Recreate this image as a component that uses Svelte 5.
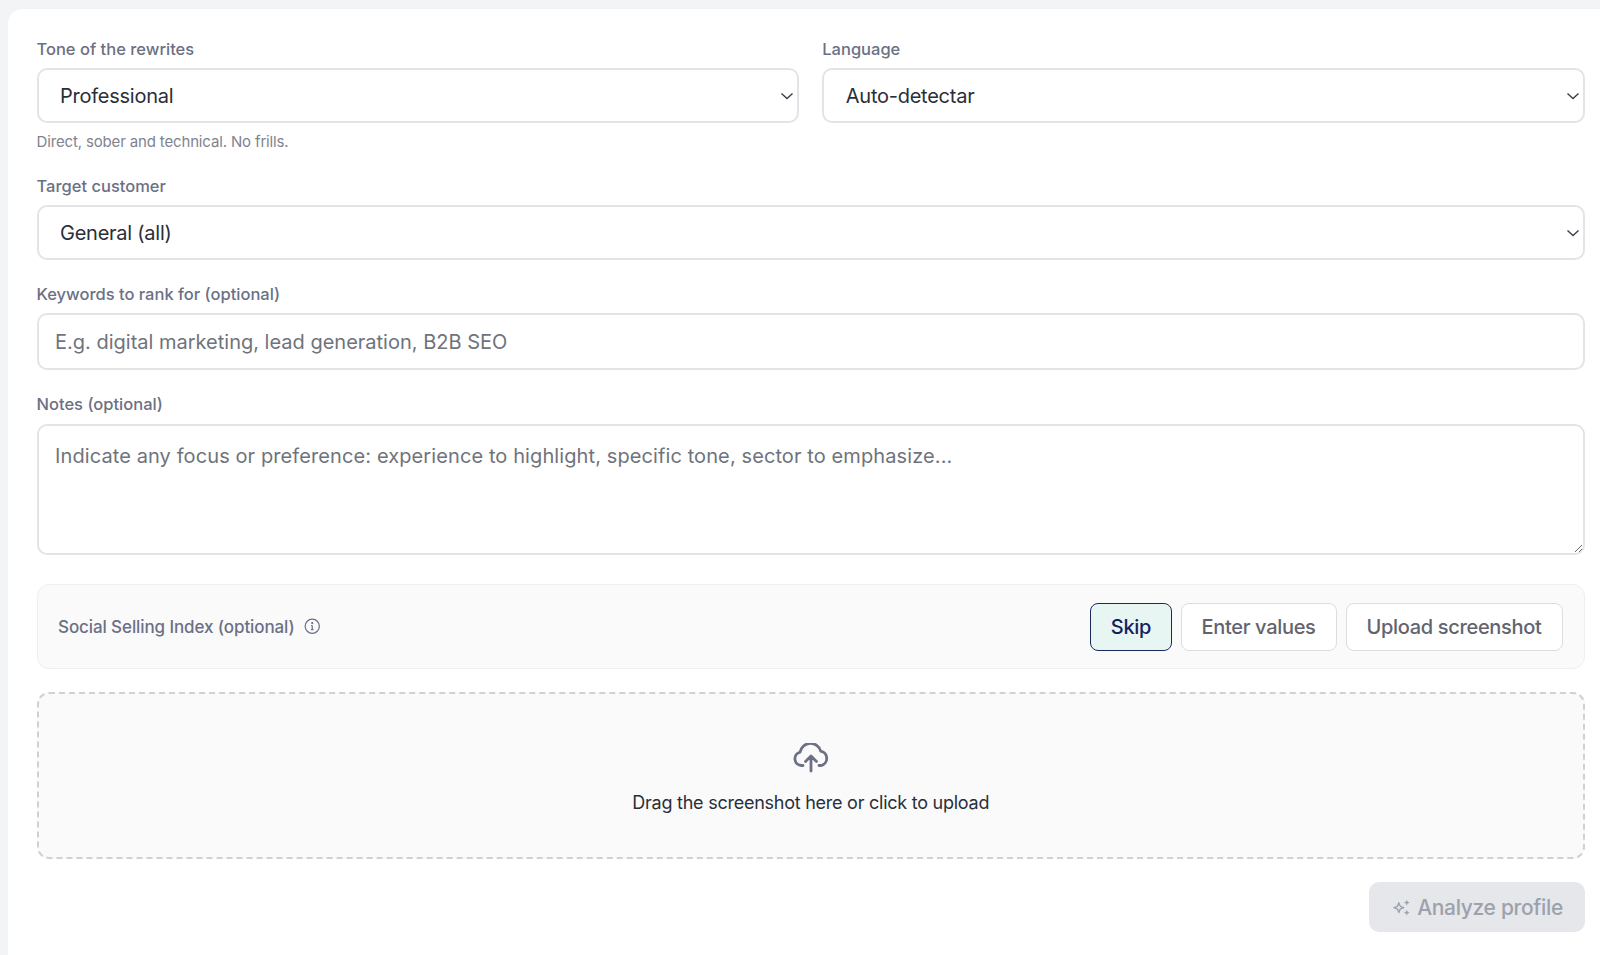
<script lang="ts">
  let tone = $state('Professional')
  let language = $state('Auto-detectar')
  let customer = $state('General (all)')
  let ssiMode = $state('skip')

  const ssiModes = [
    { id: 'skip', label: 'Skip' },
    { id: 'values', label: 'Enter values' },
    { id: 'upload', label: 'Upload screenshot' }
  ]
</script>

{#snippet chevron()}
  <svg class="chevron" viewBox="0 0 14 8" fill="none" stroke="#3b3f4a" stroke-width="1.4" aria-hidden="true">
    <path d="M1.5 1.5 7 6.5l5.5-5" />
  </svg>
{/snippet}

<div class="page">
  <form class="card" onsubmit={(e) => e.preventDefault()}>
    <div class="row">
      <div class="field">
        <label for="tone">Tone of the rewrites</label>
        <div class="select-wrap">
          <select id="tone" bind:value={tone}>
            <option>Professional</option>
            <option>Friendly</option>
          </select>
          {@render chevron()}
        </div>
        <p class="hint">Direct, sober and technical. No frills.</p>
      </div>
      <div class="field">
        <label for="language">Language</label>
        <div class="select-wrap">
          <select id="language" bind:value={language}>
            <option>Auto-detectar</option>
            <option>English</option>
          </select>
          {@render chevron()}
        </div>
      </div>
    </div>

    <div class="field">
      <label for="customer">Target customer</label>
      <div class="select-wrap">
        <select id="customer" bind:value={customer}>
          <option>General (all)</option>
          <option>B2B</option>
        </select>
        {@render chevron()}
      </div>
    </div>

    <div class="field">
      <label for="keywords">Keywords to rank for (optional)</label>
      <input id="keywords" type="text" placeholder="E.g. digital marketing, lead generation, B2B SEO" />
    </div>

    <div class="field">
      <label class="notes-label" for="notes">Notes (optional)</label>
      <textarea id="notes" placeholder="Indicate any focus or preference: experience to highlight, specific tone, sector to emphasize..."></textarea>
    </div>

    <div class="ssi">
      <div class="ssi-title">
        <span>Social Selling Index (optional)</span>
        <svg viewBox="0 0 16 16" fill="none" stroke="#6b7085" stroke-width="1.2" aria-hidden="true">
          <circle cx="8" cy="8" r="6.9" />
          <path d="M8 7.2v4M6.9 7.3H8M6.8 11.2h2.4" />
          <circle cx="8" cy="4.9" r=".5" fill="#6b7085" />
        </svg>
      </div>
      <div class="ssi-modes">
        {#each ssiModes as mode}
          <button type="button" class="mode" class:active={ssiMode === mode.id} onclick={() => (ssiMode = mode.id)}>
            {mode.label}
          </button>
        {/each}
      </div>
    </div>

    <div class="dropzone">
      <svg viewBox="0 0 36 30" fill="none" stroke="#6b7085" stroke-width="2.8" stroke-linecap="round" stroke-linejoin="round" aria-hidden="true">
        <path d="M10 22.5H8.5a6.8 6.8 0 0 1-1.4-13.4 10.6 10.6 0 0 1 20.6-1 7.4 7.4 0 0 1 .6 14.4H26" />
        <path d="M18 28V13.5M12.5 18.5l5.5-5.5 5.5 5.5" />
      </svg>
      <span>Drag the screenshot here or click to upload</span>
    </div>

    <div class="actions">
      <button type="submit" class="analyze" disabled>
        <svg viewBox="0 0 16 16" aria-hidden="true">
          <path d="M5.5 3.6 6.8 6.9l3.3 1.3-3.3 1.3-1.3 3.3-1.3-3.3L.9 8.2l3.3-1.3z" fill="none" stroke="#9ca1ad" stroke-width="1.3" stroke-linejoin="round" />
          <path d="m13 .8.8 1.9 1.9.8-1.9.8-.8 1.9-.8-1.9-1.9-.8 1.9-.8zM13 10.2l.8 1.9 1.9.8-1.9.8-.8 1.9-.8-1.9-1.9-.8 1.9-.8z" fill="#9ca1ad" />
        </svg>
        Analyze profile
      </button>
    </div>
  </form>
</div>

<style>
  :global(body) {
    margin: 0;
    background: #f3f4f6;
    font-family: Inter, "Noto Sans", sans-serif;
  }

  .page {
    height: 955px;
    padding: 9px 0 0 8px;
    box-sizing: border-box;
    overflow: hidden;
  }

  .card {
    height: 946px;
    box-sizing: border-box;
    display: flex;
    flex-direction: column;
    gap: 23px;
    padding: 29px 15px 0 28.5px;
    background: #fff;
    border-radius: 14px 0 0 0;
    box-shadow: 0 0 1px #e5e7eb;
  }

  .row {
    display: grid;
    grid-template-columns: 1fr 1fr;
    gap: 23px;
  }

  .field {
    display: flex;
    flex-direction: column;
  }

  label {
    height: 22px;
    margin-bottom: 8px;
    font-size: 16.5px;
    line-height: 22px;
    font-weight: 500;
    color: #6b7085;
  }

  .notes-label {
    margin-bottom: 9px;
  }

  .select-wrap {
    position: relative;
  }

  select,
  input,
  textarea {
    display: block;
    width: 100%;
    box-sizing: border-box;
    border: 2px solid #e3e4e8;
    border-radius: 10px;
    background: #fff;
    font: inherit;
    font-size: 20px;
    color: #2a2e39;
    outline: none;
  }

  select {
    height: 55px;
    padding: 0 40px 0 21.5px;
    letter-spacing: -0.25px;
    appearance: none;
  }

  input {
    height: 57px;
    padding: 0 16.5px;
  }

  textarea {
    height: 131px;
    padding: 16px 16.5px;
    line-height: 28px;
    letter-spacing: 0.1px;
    resize: vertical;
  }

  input::placeholder,
  textarea::placeholder {
    color: #6f737b;
    opacity: 1;
  }

  .chevron {
    position: absolute;
    top: 24px;
    right: 5px;
    width: 14px;
    height: 8px;
    pointer-events: none;
  }

  .hint {
    margin: 9px 0 0;
    font-size: 15px;
    line-height: 20px;
    letter-spacing: -0.15px;
    color: #80838f;
  }

  .ssi {
    display: flex;
    align-items: center;
    justify-content: space-between;
    height: 85px;
    margin-top: 6px;
    padding: 0 21.5px 0 20.5px;
    box-sizing: border-box;
    border: 1.5px solid #eeeff1;
    border-radius: 12px;
    background: #fafafb;
  }

  .ssi-title {
    display: flex;
    align-items: center;
    gap: 9px;
    font-size: 17px;
    font-weight: 500;
    letter-spacing: -0.1px;
    color: #6b7085;
  }

  .ssi-title svg {
    width: 16.5px;
    height: 16.5px;
  }

  .ssi-modes {
    display: flex;
    gap: 9px;
  }

  .mode {
    height: 48px;
    padding: 0 20px;
    border: 1.5px solid #dcdde1;
    border-radius: 8px;
    background: #fff;
    font: inherit;
    font-size: 20px;
    font-weight: 500;
    letter-spacing: -0.32px;
    color: #61646f;
    cursor: pointer;
  }

  .mode.active {
    padding: 0 19.5px;
    border-color: #1b2a5e;
    background: #e7f6f3;
    color: #14225c;
  }

  .dropzone {
    display: flex;
    flex-direction: column;
    align-items: center;
    justify-content: center;
    gap: 19px;
    height: 167px;
    box-sizing: border-box;
    padding-top: 4px;
    border: 2px dashed #cfd1d6;
    border-radius: 12px;
    background: #fafafa;
    font-size: 18px;
    letter-spacing: -0.25px;
    color: #2a2e39;
  }

  .dropzone svg {
    width: 36px;
    height: 30px;
  }

  .actions {
    display: flex;
    justify-content: flex-end;
  }

  .analyze {
    display: flex;
    align-items: center;
    gap: 7px;
    height: 50px;
    padding: 0 22px 0 24px;
    border: none;
    border-radius: 10px;
    background: #e5e7eb;
    font: inherit;
    font-size: 21px;
    font-weight: 500;
    letter-spacing: -0.32px;
    color: #9ca1ad;
  }

  .analyze svg {
    width: 17px;
    height: 17px;
  }
</style>
